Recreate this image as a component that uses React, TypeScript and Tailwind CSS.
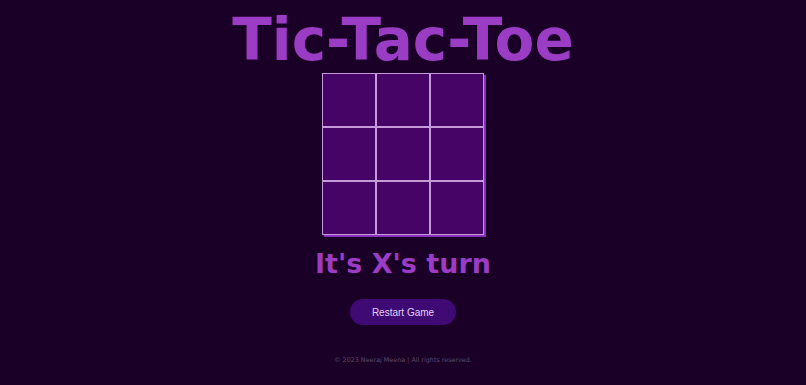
import React from "react";

export default function App() {
  const cells = Array.from({ length: 9 });
  return (
    <div className="min-h-[385px] w-full bg-[#1a0026] flex flex-col items-center" style={{ fontFamily: '"DejaVu Sans", sans-serif' }}>
      <h1 className="mt-[8px] text-[58px] leading-[64px] font-bold text-[#9a3cc4]">Tic-Tac-Toe</h1>
      <div className="mt-[1px] grid grid-cols-[repeat(3,54px)] grid-rows-[repeat(3,54px)] shadow-[2px_2px_0_0_#8a30c0]">
        {cells.map((_, i) => (
          <div key={i} className="border border-[#c49ad8] bg-[#460466]" />
        ))}
      </div>
      <div className="mt-[12px] text-[27px] leading-[34px] font-bold text-[#9a3cc4]">It's X's turn</div>
      <button className="mt-[18px] h-[26px] w-[106px] rounded-full bg-[#3f0a73] text-[#e2cff5] text-[10px]" style={{ fontFamily: '"Liberation Sans", Arial, sans-serif' }}>
        Restart Game
      </button>
      <div className="mt-[31px] text-[6.4px] text-[#5c4a6a]">© 2023 Neeraj Meena | All rights reserved.</div>
    </div>
  );
}
